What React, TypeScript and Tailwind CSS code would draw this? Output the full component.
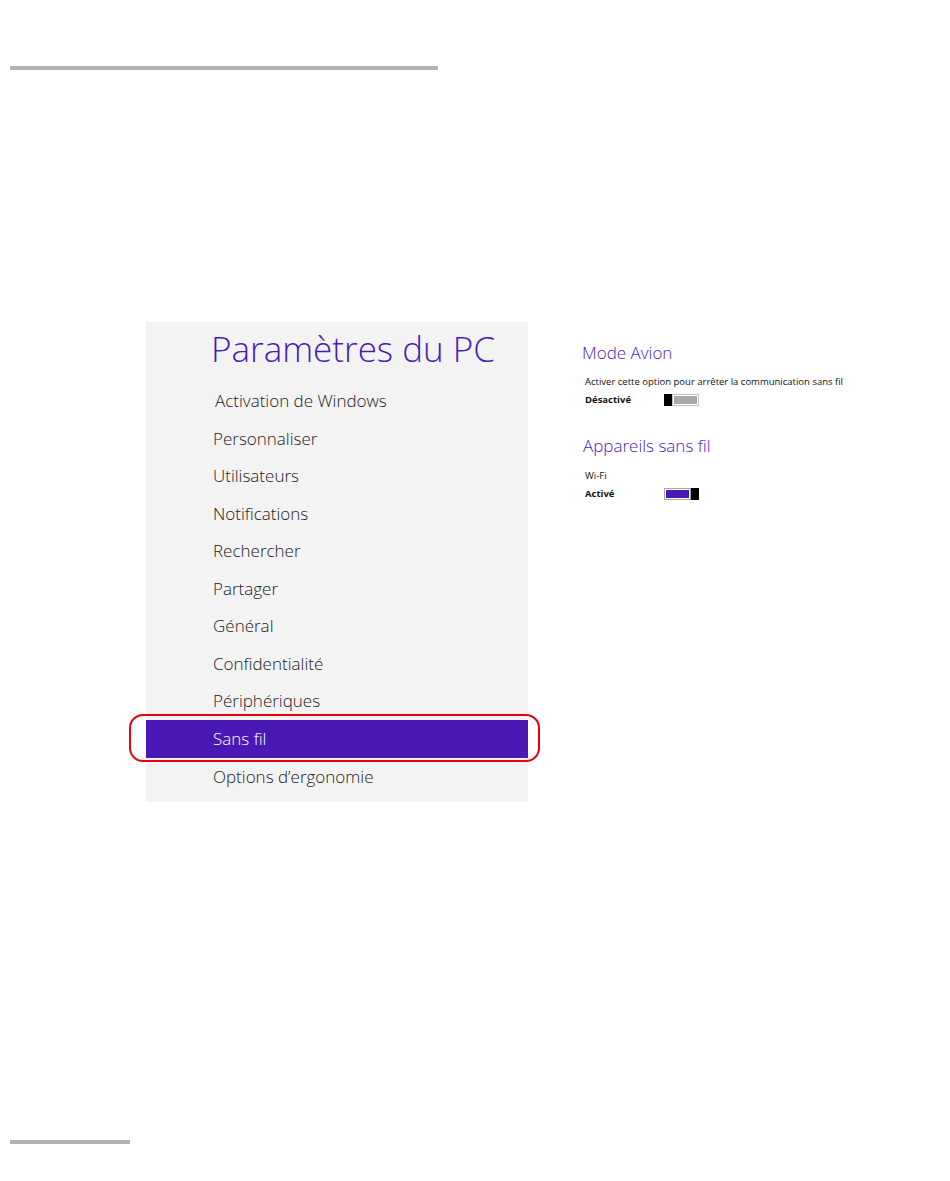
const menuItems = [
  'Activation de Windows',
  'Personnaliser',
  'Utilisateurs',
  'Notifications',
  'Rechercher',
  'Partager',
  'Général',
  'Confidentialité',
  'Périphériques',
  'Sans fil',
  'Options d’ergonomie',
];

function Toggle({ on }: { on: boolean }) {
  return (
    <div className="flex h-[12px] w-[35px]">
      {!on && <div className="w-[8px] bg-black" />}
      <div
        className={
          on
            ? 'flex-1 border border-[#a6a6a6] bg-white p-[1px]'
            : 'flex-1 border border-[#c4c4c4] bg-white p-[1px]'
        }
      >
        <div className={on ? 'h-full bg-[#4a18b5]' : 'h-full bg-[#a9a9a9]'} />
      </div>
      {on && <div className="w-[8px] bg-black" />}
    </div>
  );
}

export default function App() {
  return (
    <div className="flex h-[1181px] w-[950px] flex-col bg-white font-['Open_Sans',sans-serif]">
      {/* top rule */}
      <div className="pl-[10px] pt-[66px]">
        <div className="h-[4px] w-[428px] bg-[#b2b2b2]" />
      </div>

      <div className="mt-[252px] flex">
        {/* settings panel */}
        <div className="ml-[146px] h-[480px] w-[382px] bg-[#f3f3f3]">
          <div className="h-[60px] pl-[65px] pt-[4px] text-[35px] font-light leading-[46px] text-[#4a1bb9]">
            Paramètres du PC
          </div>
          {menuItems.map((item, i) => {
            const selected = item === 'Sans fil';
            return (
              <div
                key={item}
                className={
                  selected
                    ? 'relative flex h-[38px] items-center bg-[#4a18b5] pl-[67px] text-[17px] font-light text-white'
                    : i === 0
                      ? 'relative flex h-[37.5px] items-center pl-[69px] text-[17px] font-light text-[#222]'
                      : 'relative flex h-[37.5px] items-center pl-[67px] text-[17px] font-light text-[#222]'
                }
              >
                {item}
                {selected && (
                  <div className="absolute -bottom-[4px] -left-[17px] -right-[12px] -top-[6px] rounded-[14px] border-2 border-[#e8000b]" />
                )}
              </div>
            );
          })}
        </div>

        {/* right column */}
        <div className="ml-[54px] flex flex-col">
          <div className="mt-[20px] text-[17px] font-light leading-[22px] text-[#4a1bb9]">Mode Avion</div>
          <div className="ml-[3px] mt-[11px] text-[9.5px] leading-[14px] text-[#111]">
            Activer cette option pour arrêter la communication sans fil
          </div>
          <div className="ml-[3px] mt-[4px] flex h-[14px] items-center">
            <div className="w-[79px] text-[9.5px] font-bold text-[#111]">Désactivé</div>
            <Toggle on={false} />
          </div>

          <div className="ml-[1px] mt-[27px] text-[17px] font-light leading-[24px] text-[#4a1bb9]">
            Appareils sans fil
          </div>
          <div className="ml-[3px] mt-[11px] text-[9.5px] leading-[14px] text-[#111]">Wi-Fi</div>
          <div className="ml-[3px] mt-[4px] flex h-[14px] items-center">
            <div className="w-[79px] text-[9.5px] font-bold text-[#111]">Activé</div>
            <Toggle on />
          </div>
        </div>
      </div>

      {/* bottom rule */}
      <div className="mt-[338px] pl-[10px]">
        <div className="h-[4px] w-[120px] bg-[#b2b2b2]" />
      </div>
    </div>
  );
}
